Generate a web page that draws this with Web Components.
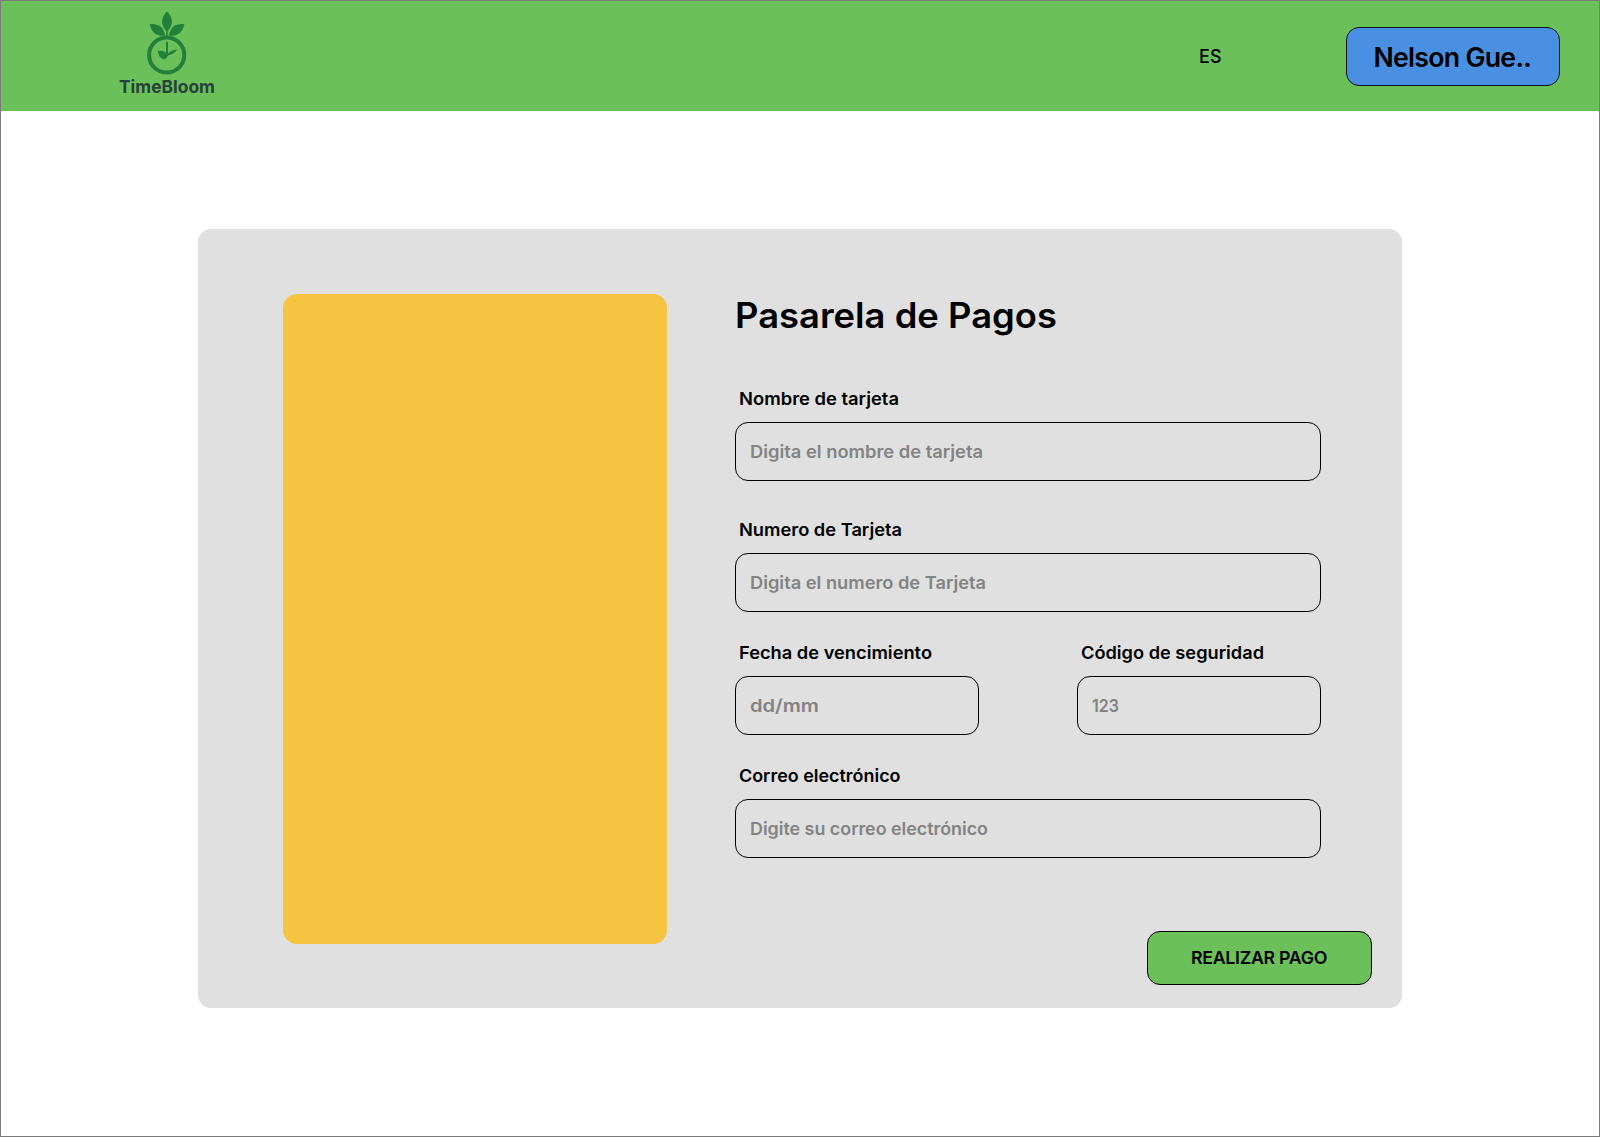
<!DOCTYPE html>
<html lang="es">
<head>
<meta charset="utf-8">
<title>TimeBloom</title>
<style>
html,body{margin:0;height:100%}
body{font-family:Inter,"Open Sans",sans-serif;color:#000;background:#fff}
</style>
</head>
<body>
<payment-page></payment-page>
<script>
function define(name, html, setup) {
  const t = document.createElement('template');
  t.innerHTML = html;
  customElements.define(name, class extends HTMLElement {
    constructor() {
      super();
      this.attachShadow({mode: 'open'}).append(t.content.cloneNode(true));
    }
    connectedCallback() { if (setup) setup(this, this.shadowRoot); }
  });
}

/* Single-line text fitted to a given width: by tracking, or by wider letterforms with "stretch" */
define('fit-text', `<style>:host{display:inline-block;white-space:nowrap}span{display:inline-block;transform-origin:0 50%}</style><span></span>`, (el, root) => {
  const s = root.querySelector('span');
  s.textContent = el.getAttribute('text');
  const w = +el.getAttribute('width');
  const natural = s.getBoundingClientRect().width;
  if (el.hasAttribute('stretch')) {
    s.style.transform = 'scaleX(' + w / natural + ')';
    el.style.width = w + 'px';
  } else {
    s.style.letterSpacing = (w - natural) / s.textContent.length + 'px';
  }
});

define('brand-logo', `<style>
:host{display:flex;flex-direction:column;align-items:center;width:98px;color:#27423b}
svg{display:block;width:44px;height:67px}
fit-text{font-size:17.8px;font-weight:700;line-height:22px}
</style>
<svg viewBox="44.8 9 44 67" fill="#23803a" aria-hidden="true">
<path d="M66.8 11.2C73 17.6 73.4 24.4 67.6 31L67.6 37H66V31C60.2 24.4 60.6 17.6 66.8 11.2Z"/>
<path d="M49.4 24.3C57.5 23.1 63.4 26.9 65 35.4C57 37 51.2 32.6 49.4 24.3Z"/>
<path d="M84.2 24.3C76.1 23.1 70.2 26.9 68.6 35.4C76.6 37 82.4 32.6 84.2 24.3Z"/>
<circle cx="66.5" cy="55" r="17.6" fill="none" stroke="#23803a" stroke-width="4"/>
<path d="M66.8 42.5V55" fill="none" stroke="#23803a" stroke-width="2" stroke-linecap="round"/>
<path d="M57.8 50.8C62 50.3 65.4 51.5 66.8 54C69.4 51.6 72.6 50 77 49.2C75.6 52.4 71.8 54.4 67.8 55.4C66.8 58.2 64.8 59.6 62.6 59.1C59.6 58 57.9 54.6 57.8 50.8Z"/>
</svg>
<fit-text text="TimeBloom" width="96" stretch></fit-text>`);

define('user-button', `<style>
:host{display:flex;align-items:center;justify-content:center;box-sizing:border-box;width:214.5px;height:59px;padding:1px 1px 0 0;border:1.2px solid #06131f;border-radius:13px;background:#4a90e2;font-size:26.7px;font-weight:600;line-height:34px}
</style><fit-text text="Nelson Gue.." width="157.5"></fit-text>`);

define('site-header', `<style>
:host{display:flex;align-items:center;box-sizing:border-box;height:110px;padding:0 39px 0 117px;background:#6bc05a}
brand-logo{align-self:flex-start;padding-top:8px}
.lang{margin-left:auto;margin-right:123.5px;padding-top:1px;font-size:18px;font-weight:500;line-height:22px}
</style>
<brand-logo></brand-logo>
<fit-text class="lang" text="ES" width="23"></fit-text>
<user-button></user-button>`);

define('form-field', `<style>
:host{display:flex;flex-direction:column;gap:11px}
.label{height:24px;line-height:24px;padding-left:4px;font-size:17.8px;font-weight:600}
.box{display:flex;align-items:center;box-sizing:border-box;height:59px;padding-left:14px;border:1.2px solid #000;border-radius:13px;color:#838383;font-size:17.8px;font-weight:600;line-height:24px}
</style><div class="label"></div><div class="box"></div>`, (el, root) => {
  const put = (sel, a) => {
    const f = document.createElement('fit-text');
    f.setAttribute('text', el.getAttribute(a));
    f.setAttribute('width', el.getAttribute(a + '-width'));
    f.setAttribute('stretch', '');
    root.querySelector(sel).append(f);
  };
  put('.label', 'label');
  put('.box', 'hint');
});

define('pay-button', `<style>
:host{display:flex;align-items:center;justify-content:center;box-sizing:border-box;width:225px;height:54px;padding-right:1px;border:1.2px solid #000;border-radius:13px;background:#6bc05a;font-size:17.8px;font-weight:600;line-height:24px}
</style><fit-text text="REALIZAR PAGO" width="136"></fit-text>`);

define('payment-form', `<style>
:host{display:flex;flex-direction:column}
h1{margin:0 0 52px;height:40px;line-height:40px;font-size:35px;font-weight:600}
.fields{display:flex;flex-direction:column;width:586px}
.second{margin-top:37px}
.row{display:flex;justify-content:space-between;margin-top:29px}
.row form-field{width:244px}
.last{margin-top:29px}
pay-button{align-self:flex-end;margin-top:73px}
</style>
<h1><fit-text text="Pasarela de Pagos" width="322" stretch></fit-text></h1>
<div class="fields">
<form-field label="Nombre de tarjeta" label-width="160" hint="Digita el nombre de tarjeta" hint-width="233"></form-field>
<form-field class="second" label="Numero de Tarjeta" label-width="163" hint="Digita el numero de Tarjeta" hint-width="236"></form-field>
<div class="row">
<form-field label="Fecha de vencimiento" label-width="193" hint="dd/mm" hint-width="69"></form-field>
<form-field label="Código de seguridad" label-width="183" hint="123" hint-width="27"></form-field>
</div>
<form-field class="last" label="Correo electrónico" label-width="161.5" hint="Digite su correo electrónico" hint-width="238"></form-field>
</div>
<pay-button></pay-button>`);

define('payment-card', `<style>
:host{display:grid;grid-template-columns:384px 637px;column-gap:68px;align-items:start;box-sizing:border-box;width:1204px;height:779px;padding:65px 30px 0 85px;border-radius:13px;background:#e0e0e0}
.panel{height:650px;border-radius:14px;background:#f5c542}
payment-form{padding-top:1px}
</style><div class="panel"></div><payment-form></payment-form>`);

define('payment-page', `<style>
:host{display:flex;flex-direction:column;box-sizing:border-box;width:1600px;height:1137px;border:1px solid #7b7b7b;background:#fff}
main{display:flex;justify-content:center;padding-top:118px}
</style><site-header></site-header><main><payment-card></payment-card></main>`);
</script>
</body>
</html>
